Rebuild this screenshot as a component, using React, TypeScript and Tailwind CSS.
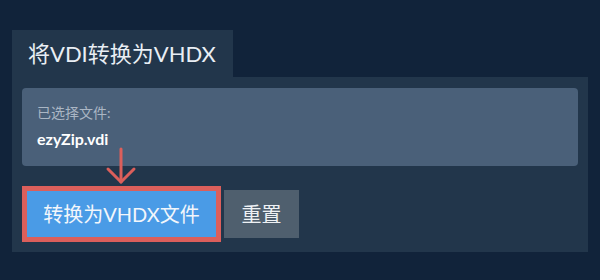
import React from 'react'

export default function App() {
    return (
        <div
            className="w-[600px] h-[280px] bg-[#11233a] pt-[30px] px-[12px]"
            style={{ fontFamily: '"Lato", "Noto Sans CJK SC", sans-serif' }}
        >
            {/* Tab header */}
            <div className="w-[221px] h-[47px] bg-[#22364b] flex items-center pl-[16px] text-[22px] text-[#e9eef4] leading-none">
                将VDI转换为VHDX
            </div>

            {/* Panel */}
            <div className="relative bg-[#22364b] h-[175px] px-[10px] pt-[11px]">
                <div className="h-[78px] bg-[#4a6079] rounded-[4px] pl-[15px] pt-[18px]">
                    <div className="text-[14px] leading-none text-[#aab6c4]">已选择文件:</div>
                    <div className="mt-[11px] text-[16px] leading-none font-bold text-white">ezyZip.vdi</div>
                </div>

                {/* Pointer arrow */}
                <svg
                    className="absolute left-[92px] top-[70px]"
                    width="34"
                    height="38"
                    viewBox="0 0 34 38"
                    fill="none"
                    stroke="#dc5f5b"
                    strokeWidth="3"
                    strokeLinecap="round"
                    strokeLinejoin="round"
                >
                    <path d="M17 2 L17 35" />
                    <path d="M4 22 L17 35 L30 22" />
                </svg>

                <div className="mt-[20px] flex items-center">
                    <div className="border-[5px] border-[#dc5f5b]">
                        <button className="w-[189px] h-[46px] bg-[#4a9be6] text-[20px] text-[#f2f6fb] leading-none">
                            转换为VHDX文件
                        </button>
                    </div>
                    <button className="ml-[3px] w-[75px] h-[48px] bg-[#4f5f6e] text-[20px] text-[#eef1f4] leading-none">
                        重置
                    </button>
                </div>
            </div>
        </div>
    )
}
